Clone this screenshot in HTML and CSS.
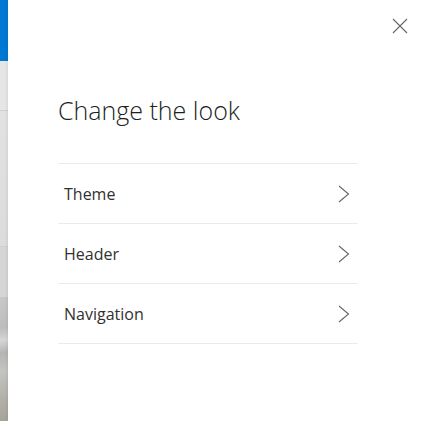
FILE: index.html
```html
<!DOCTYPE html>
<html lang="en">
<head>
<meta charset="utf-8">
<title>Change the look</title>
<link rel="stylesheet" href="styles.css">
</head>
<body>
<div class="app">
  <aside class="strip">
    <div class="strip-blue"></div>
    <div class="strip-a"></div>
    <div class="strip-b"></div>
    <div class="strip-c"></div>
    <div class="strip-photo"></div>
  </aside>
  <main class="panel">
    <div class="topbar">
      <button class="close" aria-label="Close">
        <svg width="16" height="16" viewBox="0 0 16 16"><path d="M1 1 L15 15 M15 1 L1 15" stroke="#666" stroke-width="1.1" fill="none"/></svg>
      </button>
    </div>
    <h1 class="title">Change the look</h1>
    <ul class="menu">
      <li class="item"><span>Theme</span><svg class="chev" width="12" height="18" viewBox="0 0 12 18"><path d="M1 1 L10.5 9 L1 17" stroke="#666" stroke-width="1.1" fill="none"/></svg></li>
      <li class="item"><span>Header</span><svg class="chev" width="12" height="18" viewBox="0 0 12 18"><path d="M1 1 L10.5 9 L1 17" stroke="#666" stroke-width="1.1" fill="none"/></svg></li>
      <li class="item"><span>Navigation</span><svg class="chev" width="12" height="18" viewBox="0 0 12 18"><path d="M1 1 L10.5 9 L1 17" stroke="#666" stroke-width="1.1" fill="none"/></svg></li>
    </ul>
  </main>
</div>
</body>
</html>
```
FILE: styles.css
```css
html, body {
  margin: 0;
  padding: 0;
  height: 100%;
  background: #ffffff;
}
.app {
  display: flex;
  height: 100%;
  font-family: "Open Sans", "Noto Sans", sans-serif;
  color: #323130;
}
.strip {
  width: 8px;
  flex: none;
  display: flex;
  flex-direction: column;
}
.strip-blue { height: 61px; background: #0078d4; }
.strip-a { height: 49px; background: #e6e6e6; border-bottom: 1px solid #cfcfcf; }
.strip-b { height: 135px; background: linear-gradient(#e2e2e2, #dcdcdc); border-bottom: 1px solid #d0d0d0; }
.strip-c { height: 50px; background: #d6d6d6; }
.strip-photo {
  flex: 1;
  background: linear-gradient(170deg, #c8c8c8 0%, #bdbdbd 25%, #d6d6d4 35%, #b5b5b5 45%, #c4c4c0 60%, #b3b2aa 80%, #a6a498 100%);
}
.panel {
  flex: 1;
  display: flex;
  flex-direction: column;
  padding: 0 9px 0 50px;
  box-shadow: -1px 0 3px rgba(0,0,0,0.08);
}
.topbar {
  display: flex;
  justify-content: flex-end;
  padding-top: 10px;
  height: 42px;
  box-sizing: border-box;
}
.close {
  width: 32px;
  height: 32px;
  border: 0;
  background: transparent;
  padding: 0;
  display: flex;
  align-items: center;
  justify-content: center;
}
.title {
  margin: 52px 0 0;
  font-size: 25px;
  line-height: 32px;
  font-weight: 300;
  color: #201f1e;
}
.menu {
  list-style: none;
  margin: 37px 0 0;
  padding: 0;
  width: 300px;
  border-top: 1px solid #edebe9;
}
.item {
  height: 59px;
  border-bottom: 1px solid #edebe9;
  display: flex;
  align-items: center;
  justify-content: space-between;
  padding: 0 8px 0 6px;
  font-size: 16px;
  color: #323130;
}
.chev { flex: none; }
```
